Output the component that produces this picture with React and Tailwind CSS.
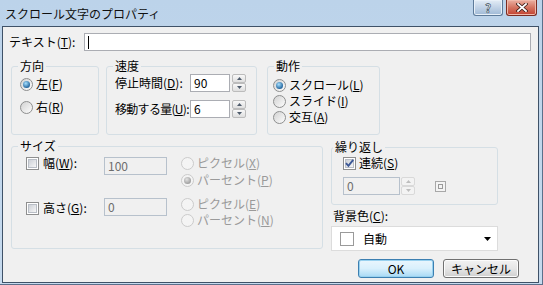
import React from "react";

const jp = "font-['Noto_Sans_CJK_JP',sans-serif]";

const K = ({ children }) => <span className="underline underline-offset-[1px]">{children}</span>;

function Radio({ checked = false, disabled = false }) {
  const ring = disabled
    ? "border-[#cbcbcb] bg-[#f4f4f4]"
    : "border-[#8e8f8f] bg-linear-to-br from-[#d2d2d2] to-[#fdfdfd]";
  return (
    <span className={`flex h-[13px] w-[13px] shrink-0 items-center justify-center rounded-full border ${ring}`}>
      {checked && !disabled && (
        <span className="h-[7px] w-[7px] rounded-full bg-[radial-gradient(circle_at_40%_35%,#a6e0ff,#1d5f98_75%)]" />
      )}
      {checked && disabled && (
        <span className="h-[7px] w-[7px] rounded-full bg-[radial-gradient(circle_at_40%_35%,#e2e2e2,#9c9c9c_75%)]" />
      )}
    </span>
  );
}

function RadioRow({ checked, disabled, children, className = "" }) {
  return (
    <div className={`flex h-[16px] items-center gap-[3px] ${className}`}>
      <Radio checked={checked} disabled={disabled} />
      <span className={disabled ? "text-[#9a9a9a]" : "text-black"}>{children}</span>
    </div>
  );
}

function Check({ checked = false }) {
  return (
    <span className="flex h-[13px] w-[13px] shrink-0 items-center justify-center border border-[#8e8f8f] bg-white">
      <span className="flex h-[9px] w-[9px] items-center justify-center border border-[#b9bec6] bg-linear-to-br from-[#cdd1d7] to-[#f6f6f6]">
        {checked && (
          <svg width="9" height="9" viewBox="0 0 9 9" className="overflow-visible">
            <path d="M1 4.2 L3.4 6.8 L8.2 0.8" fill="none" stroke="#3c5896" strokeWidth="1.9" />
          </svg>
        )}
      </span>
    </span>
  );
}

function Spin({ disabled = false }) {
  const btn = disabled
    ? "flex flex-1 items-center justify-center rounded-[2px] border border-[#d9d9d9] bg-[#f3f3f3]"
    : "flex flex-1 items-center justify-center rounded-[2px] border border-[#bcbcbc] bg-linear-to-b from-[#f8f8f8] to-[#dfdfdf]";
  const fill = disabled ? "#bdbdbd" : "#4f5c6c";
  return (
    <div className="flex h-[18px] w-[14px] flex-col">
      <div className={btn}>
        <svg width="5" height="3" viewBox="0 0 5 3">
          <path d="M0 3 H5 L2.5 0 Z" fill={fill} />
        </svg>
      </div>
      <div className={btn}>
        <svg width="5" height="3" viewBox="0 0 5 3">
          <path d="M0 0 H5 L2.5 3 Z" fill={fill} />
        </svg>
      </div>
    </div>
  );
}

function Box({ value, width, disabled = false, className = "" }) {
  const look = disabled
    ? "border-[#b7c1cc] bg-[#f0f0f0] text-[#6d6d6d]"
    : "border-[#abadb3] bg-white text-black";
  return (
    <div className={`h-[18px] shrink-0 border px-[3px] text-[12px] leading-[16px] ${look} ${width} ${className}`}>
      {value}
    </div>
  );
}

function Group({ label, className, legendClass = "ml-[6px]", children }) {
  return (
    <fieldset className={`shrink-0 rounded-[3px] border border-[#d5dfe5] ${className}`}>
      <legend className={`px-[2px] text-[12px] leading-[14px] ${legendClass}`}>{label}</legend>
      {children}
    </fieldset>
  );
}

function Button({ children, primary = false }) {
  const look = primary
    ? "border-[#3c7fb1] bg-linear-to-b from-[#eaf6fd] via-[#d9f0fc] to-[#a7d9f5] shadow-[inset_0_0_0_1px_#98d1ef]"
    : "border-[#707070] bg-linear-to-b from-[#f2f2f2] via-[#e6e6e6] to-[#cfcfcf] shadow-[inset_0_0_0_1px_#fcfcfc]";
  return (
    <div className={`flex h-[19px] w-[76px] items-center justify-center rounded-[3px] border text-[12px] ${look}`}>
      {children}
    </div>
  );
}

export default function App() {
  return (
    <div className={`flex h-[285px] w-[543px] flex-col border-r border-b border-[#5a708b] bg-linear-to-b from-[#bcd3ea] to-[#c6daee] pb-[1px] pr-[3px] pl-[2px] text-[12px] leading-[14px] text-black ${jp}`}>
      {/* title bar */}
      <div className="flex h-[26px] shrink-0 items-start">
        <div className="mt-[6px] pl-[3px] text-[12px] leading-[16px] text-[#101010]">スクロール文字のプロパティ</div>
        <div className="ml-auto flex gap-[3px] pr-[2px]">
          <div className="flex h-[16px] w-[30px] items-center justify-center rounded-b-[3px] border border-t-0 border-[#5d7a99] bg-linear-to-b from-[#e3ecf6] to-[#9fb9d6] shadow-[inset_0_0_0_1px_#e8f0f8]">
            <span className="text-[12px] font-bold leading-[14px] text-white [-webkit-text-stroke:0.6px_#2e3f52]">?</span>
          </div>
          <div className="flex h-[16px] w-[31px] items-center justify-center rounded-b-[3px] border border-t-0 border-[#7b2c22] bg-linear-to-b from-[#eab0a2] via-[#d47360] to-[#c2402f] shadow-[inset_0_0_0_1px_#f0b9aa]">
            <svg width="12" height="9" viewBox="0 0 12 9">
              <path d="M2 1 L10 8 M10 1 L2 8" stroke="#3a1a14" strokeWidth="3.4" strokeLinecap="square" />
              <path d="M2 1 L10 8 M10 1 L2 8" stroke="#ffffff" strokeWidth="1.8" strokeLinecap="square" />
            </svg>
          </div>
        </div>
      </div>

      {/* client */}
      <div className="flex h-[257px] w-[537px] flex-col border border-[#3f5268] bg-[#f0f0f0]">
        {/* text row */}
        <div className="mt-[6px] flex items-center">
          <div className="w-[81px] shrink-0 pl-[6px]">
            テキスト(<K>T</K>):
          </div>
          <div className="flex h-[18px] w-[447px] items-center border border-[#abadb3] bg-white pl-[3px]">
            <div className="h-[13px] w-px bg-black" />
          </div>
        </div>

        {/* top groups */}
        <div className="mt-[8px] flex pl-[8px]">
          <Group label="方向" className="h-[76px] w-[88px]">
            <div className="pl-[8px]">
              <RadioRow checked className="mt-[3px]">
                左(<K>F</K>)
              </RadioRow>
              <RadioRow className="mt-[7px]">
                右(<K>R</K>)
              </RadioRow>
            </div>
          </Group>

          <Group label="速度" className="ml-[7px] h-[76px] w-[151px]">
            <div className="mt-[1px] flex h-[18px] items-center">
              <div className="w-[83px] shrink-0 whitespace-nowrap pl-[8px]">
                停止時間(<K>D</K>):
              </div>
              <Box value="90" width="w-[40px]" />
              <div className="ml-[2px]">
                <Spin />
              </div>
            </div>
            <div className="mt-[8px] flex h-[18px] items-center">
              <div className="w-[83px] shrink-0 whitespace-nowrap pl-[8px] tracking-[-0.7px]">
                移動する量(<K>U</K>):
              </div>
              <Box value="6" width="w-[40px]" />
              <div className="ml-[2px]">
                <Spin />
              </div>
            </div>
          </Group>

          <Group label="動作" className="ml-[10px] h-[76px] w-[113px]">
            <div className="mt-[4px] pl-[5px]">
              <RadioRow checked>
                スクロール(<K>L</K>)
              </RadioRow>
              <RadioRow>
                スライド(<K>I</K>)
              </RadioRow>
              <RadioRow>
                交互(<K>A</K>)
              </RadioRow>
            </div>
          </Group>
        </div>

        {/* middle row */}
        <div className="flex pl-[8px]">
          <Group label="サイズ" className="mt-[4px] h-[110px] w-[312px]">
            <div className="mt-[2px] flex items-start">
              <div className="flex h-[16px] w-[92px] shrink-0 items-center gap-[4px] pl-[14px]">
                <Check />
                <span>
                  幅(<K>W</K>):
                </span>
              </div>
              <Box value="100" width="w-[63px]" disabled className="mt-[2px]" />
              <div className="ml-[14px] flex flex-col">
                <RadioRow disabled>
                  ピクセル(<K>X</K>)
                </RadioRow>
                <RadioRow disabled checked className="mt-[1px]">
                  パーセント(<K>P</K>)
                </RadioRow>
              </div>
            </div>
            <div className="mt-[8px] flex items-start">
              <div className="mt-[4px] flex h-[16px] w-[92px] shrink-0 items-center gap-[4px] pl-[14px]">
                <Check />
                <span>
                  高さ(<K>G</K>):
                </span>
              </div>
              <Box value="0" width="w-[63px]" disabled className="mt-[2px]" />
              <div className="ml-[14px] flex flex-col">
                <RadioRow disabled>
                  ピクセル(<K>E</K>)
                </RadioRow>
                <RadioRow disabled>
                  パーセント(<K>N</K>)
                </RadioRow>
              </div>
            </div>
          </Group>

          <div className="mt-[5px] ml-[8px] flex w-[167px] flex-col">
            <Group label="繰り返し" className="h-[65px] w-[167px]" legendClass="ml-[1px]">
              <div className="mt-[1px] flex h-[16px] items-center gap-[3px] pl-[11px]">
                <Check checked />
                <span>
                  連続(<K>S</K>)
                </span>
              </div>
              <div className="mt-[6px] flex items-center pl-[11px]">
                <Box value="0" width="w-[57px]" disabled className="border-[#a9bdd1]" />
                <div className="ml-[1px]">
                  <Spin disabled />
                </div>
                <div className="ml-[20px] flex h-[11px] w-[11px] items-center justify-center border border-[#a8a8a8] bg-[#f4f4f4]">
                  <div className="h-[5px] w-[5px] border border-[#9a9a9a]" />
                </div>
              </div>
            </Group>
            <div className="mt-[4px] pl-[2px]">
              背景色(<K>C</K>):
            </div>
            <div className="mt-[3px] flex h-[25px] w-[167px] items-center border border-[#dcdcdc] bg-white pl-[8px] pr-[6px]">
              <div className="h-[14px] w-[14px] border border-[#9a9a9a] bg-white" />
              <span className="ml-[9px]">自動</span>
              <svg width="7" height="4" viewBox="0 0 7 4" className="ml-auto">
                <path d="M0 0 H7 L3.5 4 Z" fill="#000" />
              </svg>
            </div>
          </div>
        </div>

        {/* buttons */}
        <div className="mt-[8px] flex justify-end gap-[9px] pr-[19px]">
          <Button primary>OK</Button>
          <Button>キャンセル</Button>
        </div>
      </div>
    </div>
  );
}
